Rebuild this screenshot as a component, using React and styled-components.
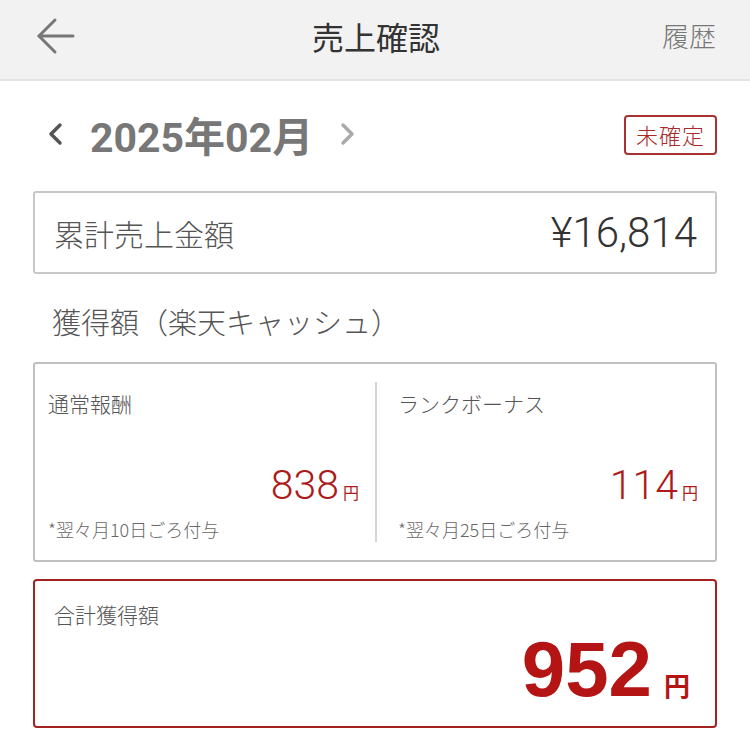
import React from 'react'
import styled, { createGlobalStyle } from 'styled-components'

const JP = `"Noto Sans CJK JP", "Noto Sans", sans-serif`
const NUM = `Roboto, "Noto Sans CJK JP", sans-serif`
const RED = '#ad1a1a'

const GlobalStyle = createGlobalStyle`
  body {
    margin: 0;
    background: #fff;
    font-family: ${JP};
    color: #333;
  }
`

const rewards = [
  { label: '通常報酬', amount: '838', note: '*翌々月10日ごろ付与' },
  { label: 'ランクボーナス', amount: '114', note: '*翌々月25日ごろ付与' },
]

function BackArrow() {
  return (
    <svg width="40" height="40" viewBox="0 0 40 40" fill="none" stroke="#777" strokeWidth="3" strokeLinecap="round" strokeLinejoin="round">
      <path d="M37 19H3" />
      <path d="M19 3L3 19L19 35" />
    </svg>
  )
}

function Chevron({ dir, color }) {
  return (
    <svg width="16" height="24" viewBox="0 0 16 24" fill="none" stroke={color} strokeWidth="3.5" strokeLinecap="round" strokeLinejoin="round">
      {dir === 'left' ? <path d="M12 3L3 12L12 21" /> : <path d="M4 3L13 12L4 21" />}
    </svg>
  )
}

function App() {
  return (
    <>
      <GlobalStyle />
      <Page>
        <Header>
          <BackButton><BackArrow /></BackButton>
          <Title>売上確認</Title>
          <HistoryLink>履歴</HistoryLink>
        </Header>

        <Content>
          <MonthRow>
            <MonthNav>
              <Chevron dir="left" color="#555" />
              <Month>2025年02月</Month>
              <Chevron dir="right" color="#aaa" />
            </MonthNav>
            <Badge>未確定</Badge>
          </MonthRow>

          <SalesBox>
            <SalesLabel>累計売上金額</SalesLabel>
            <SalesValue>¥16,814</SalesValue>
          </SalesBox>

          <SectionTitle>獲得額（楽天キャッシュ）</SectionTitle>

          <RewardGrid>
            {rewards.map((r, i) => (
              <RewardCol key={r.label} $first={i === 0}>
                <SmallLabel>{r.label}</SmallLabel>
                <Amount>
                  <AmountNum>{r.amount}</AmountNum>
                  <Yen>円</Yen>
                </Amount>
                <Note>{r.note}</Note>
              </RewardCol>
            ))}
          </RewardGrid>

          <TotalBox>
            <SmallLabel>合計獲得額</SmallLabel>
            <TotalAmount>
              <TotalNum>952</TotalNum>
              <TotalYen>円</TotalYen>
            </TotalAmount>
          </TotalBox>
        </Content>
      </Page>
    </>
  )
}

export default App

const Page = styled.div`
  width: 750px;
  min-height: 733px;
  background: #fff;
`
const Header = styled.header`
  height: 79px;
  background: #f2f2f2;
  border-bottom: 2px solid #e4e4e4;
  display: grid;
  grid-template-columns: 1fr auto 1fr;
  align-items: center;
  padding: 0 34px 0 36px;
`
const BackButton = styled.div`
  display: flex;
  align-items: center;
  margin-top: -6px;
`
const Title = styled.h1`
  margin: -8px 0 0;
  font-size: 32px;
  font-weight: 400;
  color: #333;
`
const HistoryLink = styled.div`
  justify-self: end;
  font-size: 27px;
  font-weight: 300;
  color: #777;
  margin-top: -8px;
`
const Content = styled.main`
  padding: 0 33px;
`
const MonthRow = styled.div`
  height: 110px;
  display: flex;
  align-items: center;
  justify-content: space-between;
`
const MonthNav = styled.div`
  display: flex;
  align-items: center;
  gap: 26px;
  padding-left: 15px;
  margin-top: -4px;
`
const Month = styled.div`
  font-family: ${NUM};
  font-size: 41px;
  font-weight: 700;
  color: #777;
`
const Badge = styled.div`
  border: 2px solid #a83232;
  border-radius: 4px;
  padding: 1px 10px 3px;
  font-size: 22px;
  font-weight: 300;
  color: #a52a2a;
  letter-spacing: 1px;
  margin-top: -2px;
`
const SalesBox = styled.div`
  height: 83px;
  box-sizing: border-box;
  border: 2px solid #c8c8c8;
  border-radius: 3px;
  display: flex;
  align-items: center;
  justify-content: space-between;
  padding: 0 18px 0 19px;
`
const SalesLabel = styled.div`
  font-size: 30px;
  font-weight: 300;
  color: #555;
`
const SalesValue = styled.div`
  font-family: ${NUM};
  font-size: 42px;
  font-weight: 300;
  color: #333;
`
const SectionTitle = styled.h2`
  margin: 0;
  padding: 26px 0 0 19px;
  height: 62px;
  font-size: 29px;
  font-weight: 300;
  color: #555;
`
const RewardGrid = styled.div`
  display: grid;
  grid-template-columns: 1fr 1fr;
  border: 2px solid #c0c0c0;
  border-radius: 3px;
  height: 200px;
  box-sizing: border-box;
  padding: 18px 0;
`
const RewardCol = styled.div`
  display: flex;
  flex-direction: column;
  padding: ${p => (p.$first ? '6px 16px 0 13px' : '6px 17px 0 21px')};
  border-left: ${p => (p.$first ? 'none' : '2px solid #d4d4d4')};
`
const SmallLabel = styled.div`
  font-size: 21px;
  font-weight: 300;
  color: #555;
  line-height: 30px;
`
const Amount = styled.div`
  display: flex;
  justify-content: flex-end;
  align-items: baseline;
  margin-top: 44px;
  color: ${RED};
`
const AmountNum = styled.span`
  font-family: ${NUM};
  font-size: 41px;
  font-weight: 300;
  line-height: 46px;
`
const Yen = styled.span`
  font-size: 16px;
  margin-left: 4px;
`
const Note = styled.div`
  font-size: 18px;
  font-weight: 300;
  color: #666;
  margin-top: 8px;
`
const TotalBox = styled.div`
  margin-top: 17px;
  height: 149px;
  box-sizing: border-box;
  border: 2px solid #a52222;
  border-radius: 4px;
  padding: 18px 25px 0 19px;
`
const TotalAmount = styled.div`
  display: flex;
  justify-content: flex-end;
  align-items: baseline;
  color: #b41414;
`
const TotalNum = styled.span`
  font-family: "Liberation Sans", Arial, sans-serif;
  font-size: 78px;
  font-weight: 700;
  line-height: 80px;
`
const TotalYen = styled.span`
  font-size: 26px;
  font-weight: 700;
  margin-left: 12px;
`
